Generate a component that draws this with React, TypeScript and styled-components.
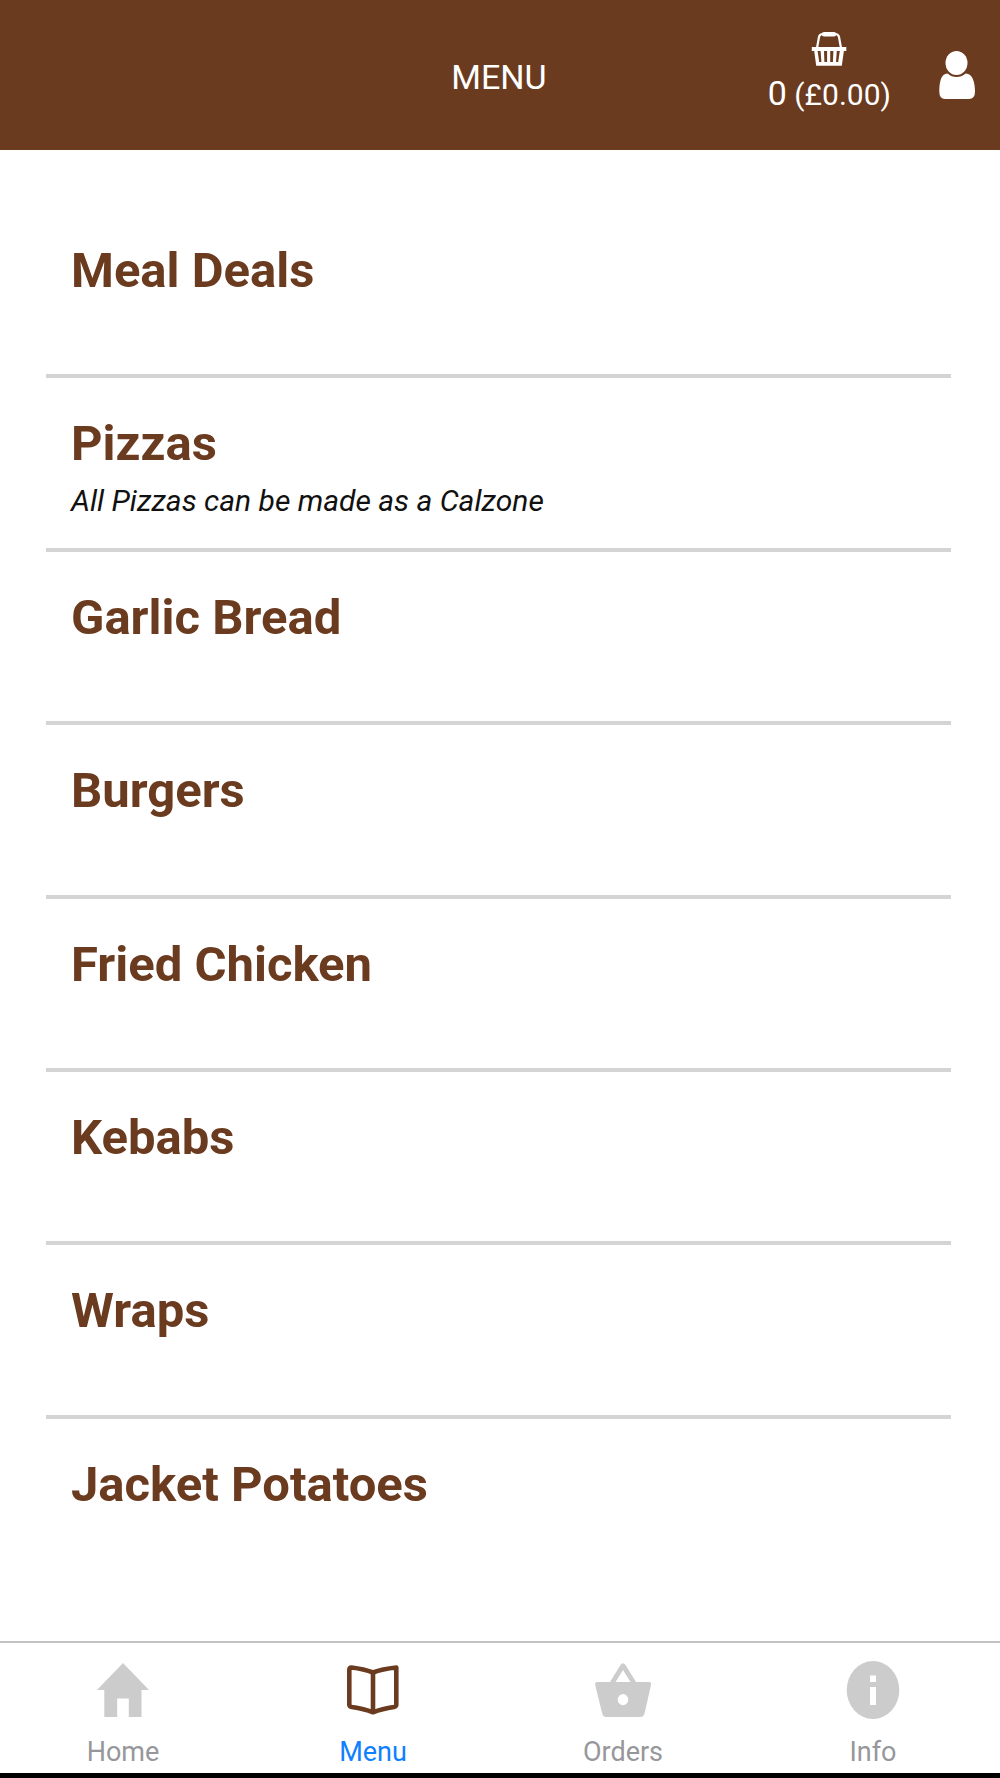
import React from "react";
import styled, { createGlobalStyle } from "styled-components";

const brown = "#6b3b20";

const GlobalStyle = createGlobalStyle`
  *, *::before, *::after { box-sizing: border-box; }
  body {
    margin: 0;
    background: #fff;
    font-family: Roboto, "Liberation Sans", sans-serif;
  }
`;

const Screen = styled.div`
  display: flex;
  flex-direction: column;
  min-height: 100vh;
`;

const Header = styled.header`
  display: grid;
  grid-template-columns: 1fr auto 1fr;
  align-items: center;
  height: 150px;
  padding: 0 25px;
  background: ${brown};
  color: #fff;
`;

const Title = styled.h1`
  grid-column: 2;
  margin: 0;
  padding: 4px 2px 0 0;
  font-size: 34px;
  line-height: 40px;
  font-weight: 400;
`;

const Actions = styled.div`
  display: flex;
  align-items: center;
  justify-content: flex-end;
  gap: 48px;
`;

const HeaderButton = styled.button`
  display: flex;
  flex-direction: column;
  align-items: center;
  gap: 6px;
  padding: 0;
  border: 0;
  background: none;
  color: inherit;
  font: inherit;
  cursor: pointer;
`;

const CartButton = styled(HeaderButton)`
  padding-bottom: 4px;
`;

const Total = styled.span`
  font-size: 30px;
  line-height: 40px;
  white-space: nowrap;
`;

const Count = styled.span`
  font-size: 34px;
`;

const List = styled.ul`
  flex: 1;
  display: grid;
  grid-auto-rows: minmax(150px, 1fr);
  margin: 0;
  padding: 55px 49px 49px 46px;
  list-style: none;
`;

const Row = styled.li`
  border-bottom: 4px solid #d4d4d4;

  &:last-child {
    border-bottom-color: transparent;
  }
`;

const Category = styled.a`
  display: block;
  height: 100%;
  padding: 36px 25px 0;
  color: ${brown};
  text-decoration: none;
`;

const Name = styled.h2`
  margin: 0;
  font-size: 49px;
  line-height: 60px;
  font-weight: 700;
`;

const Note = styled.p`
  margin: 0;
  color: #111;
  font-size: 30px;
  line-height: 54px;
  font-style: italic;
`;

const TabBar = styled.nav`
  display: grid;
  grid-template-columns: repeat(4, 1fr);
  height: 137px;
  border-top: 2px solid #c2c2c2;
  border-bottom: 5px solid #000;
`;

const Tab = styled.a<{ $active?: boolean }>`
  display: flex;
  flex-direction: column;
  align-items: center;
  gap: 16px;
  padding: 17px 4px 0 0;
  color: ${(p) => (p.$active ? "#0f80ff" : "#97979b")};
  font-size: 27px;
  line-height: 32px;
  text-decoration: none;
`;

const CartIcon = () => (
  <svg width="36" height="36" viewBox="0 0 36 36" aria-hidden="true">
    <path d="M6 17 8 6Q8.500 3 12 3H24Q27.500 3 28 6L30 17" fill="none" stroke="#fff" strokeWidth="2.200" />
    <path d="M13 3.200H23" stroke="#fff" strokeWidth="4.400" strokeLinecap="round" />
    <path
      fill="#fff"
      fillRule="evenodd"
      d="M.8 16H35.300V20H32.900L30.800 34.800H5.200L3.200 20H.8ZM6.600 20 8.200 31H10.400L9.600 20ZM13 20 13.400 31H16.100V20ZM19.200 20V31H21.900L22.400 20ZM25.800 20 25 31H27.200L28.800 20Z"
    />
  </svg>
);

const UserIcon = () => (
  <svg width="36" height="48" viewBox="0 0 36 48" aria-hidden="true">
    <ellipse cx="17.500" cy="12" rx="11" ry="12" fill="#fff" />
    <path
      fill="#fff"
      d="M8.500 22.500Q12.500 26 17.500 26T26.700 22.500C33.500 22.800 36 31 36 40.500Q36 48 30 48H6Q.3 48 .3 40.500C.3 31 2 22.800 8.500 22.500Z"
    />
  </svg>
);

const HomeIcon = () => (
  <svg width="58" height="60" viewBox="0 0 58 60" aria-hidden="true">
    <path fill="#ccc" d="M29 3 55 30H47.500V57H34.800V38.500H23.200V57H10.300V30H3Z" />
  </svg>
);

const BookIcon = () => (
  <svg width="58" height="60" viewBox="0 0 58 60" aria-hidden="true">
    <g fill="none" stroke={brown} strokeWidth="4.600" strokeLinejoin="round">
      <path d="M29 12.500Q20 9 7.500 7.500Q5.300 7.500 5.300 10V44.500Q5.300 46.500 8 47Q20 48.800 29 52.300Q38 48.800 50 47Q52.300 46.500 52.300 44.500V7.500Q38 9 29 12.500Z" />
      <path d="M29 12.500V52" />
    </g>
  </svg>
);

const BasketIcon = () => (
  <svg width="58" height="60" viewBox="0 0 58 60" aria-hidden="true">
    <path
      fill="#ccc"
      fillRule="evenodd"
      d="M16 22 26.500 5Q29 1.500 31.500 5L42 22H55Q57.500 22 57 25L50.500 53.500Q49.700 57 46 57H12.500Q9 57 8.200 53.500L1.200 25Q.7 22 3.200 22ZM21.500 22H36.500L29 10ZM29 34A5.300 5.600 0 1 0 29 45.200A5.300 5.600 0 1 0 29 34Z"
    />
  </svg>
);

const InfoIcon = () => (
  <svg width="58" height="60" viewBox="0 0 58 60" aria-hidden="true">
    <ellipse cx="29" cy="30" rx="26.300" ry="29" fill="#ccc" />
    <path fill="#fff" d="M26 15.500H32V22H26ZM26 27H32V45H26Z" />
  </svg>
);

const categories: { name: string; note?: string }[] = [
  { name: "Meal Deals" },
  { name: "Pizzas", note: "All Pizzas can be made as a Calzone" },
  { name: "Garlic Bread" },
  { name: "Burgers" },
  { name: "Fried Chicken" },
  { name: "Kebabs" },
  { name: "Wraps" },
  { name: "Jacket Potatoes" },
];

const tabs = [
  { label: "Home", Icon: HomeIcon },
  { label: "Menu", Icon: BookIcon, active: true },
  { label: "Orders", Icon: BasketIcon },
  { label: "Info", Icon: InfoIcon },
];

export default function App() {
  return (
    <Screen>
      <GlobalStyle />
      <Header>
        <Title>MENU</Title>
        <Actions>
          <CartButton type="button">
            <CartIcon />
            <Total>
              <Count>0</Count> (£0.00)
            </Total>
          </CartButton>
          <HeaderButton type="button" aria-label="Account">
            <UserIcon />
          </HeaderButton>
        </Actions>
      </Header>
      <List>
        {categories.map(({ name, note }) => (
          <Row key={name}>
            <Category href="#">
              <Name>{name}</Name>
              {note && <Note>{note}</Note>}
            </Category>
          </Row>
        ))}
      </List>
      <TabBar>
        {tabs.map(({ label, Icon, active }) => (
          <Tab key={label} href="#" $active={active} aria-current={active ? "page" : undefined}>
            <Icon />
            {label}
          </Tab>
        ))}
      </TabBar>
    </Screen>
  );
}
